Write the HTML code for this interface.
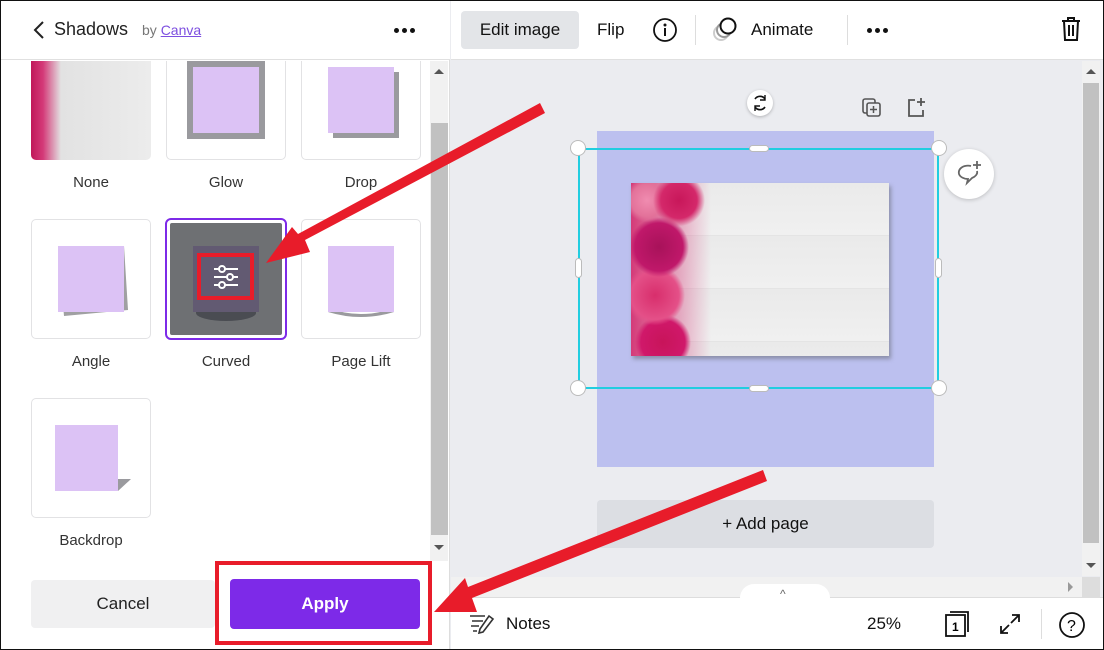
<!DOCTYPE html>
<html><head><style>
*{box-sizing:border-box;margin:0;padding:0}
body{width:1104px;height:650px;overflow:hidden;font-family:"Liberation Sans",sans-serif;background:#ebecf0;position:relative;color:#111}
.a{position:absolute}
.tile{position:absolute;width:120px;height:120px;border:1px solid #e2e2e4;border-radius:5px;background:#fff}
.lbl{position:absolute;width:120px;text-align:center;font-size:15px;color:#333}
.sq{position:absolute;background:#dcc2f5}
.dots{position:absolute;display:flex;gap:3px}
.dots i{display:block;width:5px;height:5px;border-radius:50%;background:#111}
</style></head><body>
<div class="a" style="left:0;top:0;width:450px;height:650px;background:#fff;border-right:1px solid #ddd"></div>
<div class="a" style="left:0;top:0;width:450px;height:60px;border-bottom:1px solid #e0e0e0;background:#fff"></div>
<svg class="a" style="left:32px;top:20px" width="14" height="20"><path d="M11 2 L3 10 L11 18" stroke="#222" stroke-width="2" fill="none"/></svg>
<div class="a" style="left:54px;top:19px;font-size:18px;color:#222">Shadows</div>
<div class="a" style="left:142px;top:22px;font-size:14px;color:#777">by <span style="color:#7d4fe0;text-decoration:underline">Canva</span></div>
<div class="dots" style="left:394px;top:28px"><i></i><i></i><i></i></div>
<div class="a" style="left:430px;top:61px;width:18px;height:500px;background:#f1f1f1"></div>
<div class="a" style="left:431px;top:123px;width:17px;height:412px;background:#c1c1c1"></div>
<div class="a" style="left:434px;top:69px;width:0;height:0;border:5px solid transparent;border-bottom:5px solid #555;border-top:0"></div>
<div class="a" style="left:434px;top:545px;width:0;height:0;border:5px solid transparent;border-top:5px solid #555;border-bottom:0"></div>
<div class="a" style="left:31px;top:61px;width:120px;height:99px;border-radius:0 0 5px 5px;overflow:hidden;background:linear-gradient(90deg,#c0185a 0,#d43a78 12px,#e2e2e2 30px,#ececec 100%)"></div>
<div class="tile" style="left:166px;top:61px;height:99px;border-top:none;border-radius:0 0 5px 5px"></div>
<div class="a" style="left:187px;top:61px;width:78px;height:78px;background:#9a9a9e"></div>
<div class="sq" style="left:193px;top:67px;width:66px;height:66px"></div>
<div class="tile" style="left:301px;top:61px;height:99px;border-top:none;border-radius:0 0 5px 5px"></div>
<div class="a" style="left:333px;top:72px;width:66px;height:66px;background:#9a9a9e"></div>
<div class="sq" style="left:328px;top:67px;width:66px;height:66px"></div>
<div class="lbl" style="left:31px;top:174px">None</div>
<div class="lbl" style="left:166px;top:174px">Glow</div>
<div class="lbl" style="left:301px;top:174px">Drop</div>
<div class="tile" style="left:31px;top:219px"></div>
<svg class="a" style="left:58px;top:246px" width="72" height="72"><path d="M0 0 H66 L70 64 L6 70 Z" fill="#a0a0a2"/><rect width="66" height="66" fill="#dcc2f5"/></svg>
<div class="a" style="left:165px;top:218px;width:122px;height:122px;border:2px solid #7d2ae8;border-radius:6px;background:#fff;padding:3px"><div style="width:112px;height:112px;background:#6e7073;border-radius:2px"></div></div>
<div class="a" style="left:193px;top:246px;width:66px;height:66px;background:#625a72"></div>
<div class="a" style="left:196px;top:312px;width:60px;height:9px;background:#4a4c52;border-radius:0 0 30px 30px/0 0 8px 8px"></div>
<div class="a" style="left:197px;top:253px;width:57px;height:47px;border:4px solid #e81c2a"></div>
<svg class="a" style="left:212px;top:264px" width="28" height="26"><g stroke="#fff" stroke-width="2" fill="#625a72"><line x1="2" y1="5" x2="26" y2="5"/><line x1="2" y1="13" x2="26" y2="13"/><line x1="2" y1="21" x2="26" y2="21"/><circle cx="10" cy="5" r="3"/><circle cx="18" cy="13" r="3"/><circle cx="10" cy="21" r="3"/></g></svg>
<div class="tile" style="left:301px;top:219px"></div>
<svg class="a" style="left:328px;top:246px" width="68" height="74"><path d="M0 62 Q33 74 66 62 V66 Q33 76 0 66Z" fill="#9a9a9e"/><rect width="66" height="66" fill="#dcc2f5"/></svg>
<div class="lbl" style="left:31px;top:353px">Angle</div>
<div class="lbl" style="left:166px;top:353px">Curved</div>
<div class="lbl" style="left:301px;top:353px">Page Lift</div>
<div class="tile" style="left:31px;top:398px"></div>
<svg class="a" style="left:55px;top:425px" width="80" height="72"><rect width="63" height="66" fill="#dcc2f5"/><path d="M63 54 L76 54 L63 66Z" fill="#9a9a9e"/></svg>
<div class="lbl" style="left:31px;top:532px">Backdrop</div>
<div class="a" style="left:31px;top:580px;width:184px;height:48px;background:#f0f0f1;border-radius:4px;text-align:center;line-height:48px;font-size:17px;color:#222">Cancel</div>
<div class="a" style="left:230px;top:579px;width:190px;height:50px;background:#7d2ae8;border-radius:4px;text-align:center;line-height:50px;font-size:17px;color:#fff;font-weight:bold">Apply</div>
<div class="a" style="left:215px;top:561px;width:217px;height:84px;border:4px solid #e81c2a"></div>

<div class="a" style="left:451px;top:0;width:653px;height:60px;background:#fff;border-bottom:1px solid #e0e0e0"></div>
<div class="a" style="left:461px;top:11px;width:118px;height:38px;background:#e3e5e8;border-radius:4px;text-align:center;line-height:38px;font-size:17px">Edit image</div>
<div class="a" style="left:597px;top:20px;font-size:17px">Flip</div>
<svg class="a" style="left:652px;top:17px" width="26" height="26"><circle cx="13" cy="13" r="11" stroke="#111" stroke-width="1.8" fill="none"/><circle cx="13" cy="8" r="1.5" fill="#111"/><line x1="13" y1="11" x2="13" y2="19" stroke="#111" stroke-width="2"/></svg>
<div class="a" style="left:695px;top:15px;width:1px;height:30px;background:#ddd"></div>
<svg class="a" style="left:711px;top:15px" width="30" height="30"><circle cx="10" cy="18" r="7" fill="none" stroke="#ccc" stroke-width="2"/><circle cx="13" cy="15" r="7" fill="#fff" stroke="#999" stroke-width="2"/><circle cx="17" cy="11" r="7.5" fill="#fff" stroke="#111" stroke-width="2"/></svg>
<div class="a" style="left:751px;top:20px;font-size:17px">Animate</div>
<div class="a" style="left:847px;top:15px;width:1px;height:30px;background:#ddd"></div>
<div class="dots" style="left:867px;top:28px"><i></i><i></i><i></i></div>
<svg class="a" style="left:1059px;top:16px" width="24" height="26"><path d="M3 5H21M9 5V2H15V5M5 5L6 24H18L19 5M10 9V20M14 9V20" stroke="#111" stroke-width="2" fill="none"/></svg>

<div class="a" style="left:1082px;top:61px;width:18px;height:515px;background:#f1f1f1"></div>
<div class="a" style="left:1083px;top:83px;width:16px;height:460px;background:#c1c1c1"></div>
<div class="a" style="left:1086px;top:69px;border:5px solid transparent;border-bottom:5px solid #555;border-top:0"></div>
<div class="a" style="left:1086px;top:563px;border:5px solid transparent;border-top:5px solid #555;border-bottom:0"></div>
<div class="a" style="left:451px;top:577px;width:631px;height:20px;background:#f1f1f1"></div>
<div class="a" style="left:1068px;top:582px;border:5px solid transparent;border-left:5px solid #999;border-right:0"></div>
<div class="a" style="left:1082px;top:577px;width:18px;height:20px;background:#ddd"></div>

<div class="a" style="left:747px;top:90px;width:26px;height:26px;border-radius:50%;background:#fff;box-shadow:0 1px 3px rgba(0,0,0,.25)"></div>
<svg class="a" style="left:750px;top:93px" width="20" height="20"><path d="M5 6A6 6 0 0 1 15 6M15 14A6 6 0 0 1 5 14" fill="none" stroke="#111" stroke-width="1.6"/><path d="M15 2V7H10M5 18V13H10" fill="none" stroke="#111" stroke-width="1.4"/></svg>
<svg class="a" style="left:861px;top:97px" width="22" height="22"><rect x="2" y="2" width="12" height="14" rx="2" fill="none" stroke="#555" stroke-width="1.6"/><rect x="6" y="6" width="13" height="13" rx="2" fill="#ebecf0" stroke="#555" stroke-width="1.6"/><path d="M12.5 9V16M9 12.5H16" stroke="#555" stroke-width="1.5"/></svg>
<svg class="a" style="left:906px;top:96px" width="22" height="22"><path d="M9 4H3V20H17V14M15 2V10M11 6H19" stroke="#555" stroke-width="1.8" fill="none"/></svg>

<div class="a" style="left:597px;top:131px;width:337px;height:336px;background:#bcc0ef"></div>
<div class="a" style="left:633px;top:186px;width:258px;height:173px;background:#8a8ea8;filter:blur(2px)"></div>
<div class="a" style="left:631px;top:183px;width:258px;height:173px;background:repeating-linear-gradient(180deg,#eaeaea 0,#f0f0f0 52px,#d8d8d8 53px)"></div>
<div class="a" style="left:631px;top:183px;width:80px;height:173px;background:radial-gradient(circle at 60% 10%,#c8175a 0,#d4286a 18px,transparent 26px),radial-gradient(circle at 20% 10%,#f08cb0 0,#e3729a 16px,transparent 22px),radial-gradient(circle at 35% 37%,#a8125a 0,#c0186a 24px,transparent 30px),radial-gradient(circle at 30% 65%,#d82e6c 0,#e45088 24px,transparent 30px),radial-gradient(circle at 40% 92%,#c8145a 0,#d0186a 22px,transparent 28px),linear-gradient(90deg,#d43a78,rgba(240,240,240,0))"></div>
<div class="a" style="left:578px;top:148px;width:361px;height:241px;border:2px solid #21cde0"></div>
<div class="a" style="left:570px;top:140px;width:16px;height:16px;border-radius:50%;background:#fff;border:1px solid #bbb"></div>
<div class="a" style="left:931px;top:140px;width:16px;height:16px;border-radius:50%;background:#fff;border:1px solid #bbb"></div>
<div class="a" style="left:570px;top:380px;width:16px;height:16px;border-radius:50%;background:#fff;border:1px solid #bbb"></div>
<div class="a" style="left:931px;top:380px;width:16px;height:16px;border-radius:50%;background:#fff;border:1px solid #bbb"></div>
<div class="a" style="left:749px;top:145px;width:20px;height:7px;border-radius:4px;background:#fff;border:1px solid #bbb"></div>
<div class="a" style="left:749px;top:385px;width:20px;height:7px;border-radius:4px;background:#fff;border:1px solid #bbb"></div>
<div class="a" style="left:575px;top:258px;width:7px;height:20px;border-radius:4px;background:#fff;border:1px solid #bbb"></div>
<div class="a" style="left:935px;top:258px;width:7px;height:20px;border-radius:4px;background:#fff;border:1px solid #bbb"></div>
<div class="a" style="left:944px;top:149px;width:50px;height:50px;border-radius:50%;background:#fff;box-shadow:0 1px 4px rgba(0,0,0,.2)"></div>
<svg class="a" style="left:955px;top:160px" width="30" height="28"><path d="M16 6C14 5.5 12 5.5 10 6C6 7 3 10 4 14C5 17 9 19 13 19L12 23L17 18C20 17 23 14 22 11" fill="none" stroke="#666" stroke-width="1.8"/><path d="M22 1V9M18 5H26" stroke="#666" stroke-width="1.8"/></svg>

<div class="a" style="left:597px;top:500px;width:337px;height:48px;background:#dcdee3;border-radius:4px;text-align:center;line-height:48px;font-size:17px">+ Add page</div>

<div class="a" style="left:451px;top:597px;width:653px;height:53px;background:#fff;border-top:1px solid #ddd"></div>
<div class="a" style="left:740px;top:584px;width:90px;height:16px;background:#fff;border-radius:14px 14px 0 0"></div>
<div class="a" style="left:780px;top:587px;font-size:12px;color:#666">^</div>
<svg class="a" style="left:469px;top:613px" width="26" height="22"><path d="M1 3H16M3 8H14M2 13H10M4 18H8" stroke="#333" stroke-width="1.6"/><path d="M20 3L24 6L14 19L10 20L11 16Z" fill="none" stroke="#333" stroke-width="1.6"/></svg>
<div class="a" style="left:506px;top:614px;font-size:17px">Notes</div>
<div class="a" style="left:867px;top:614px;font-size:17px">25%</div>
<svg class="a" style="left:944px;top:609px" width="30" height="30"><path d="M6 3H24V23" fill="none" stroke="#111" stroke-width="1.8"/><rect x="2" y="6" width="19" height="21" fill="#fff" stroke="#111" stroke-width="1.8"/><text x="8" y="22" font-size="12" font-family="Liberation Sans" font-weight="bold">1</text></svg>
<svg class="a" style="left:998px;top:612px" width="24" height="24"><path d="M14 3H21V10M21 3L13 11M10 21H3V14M3 21L11 13" stroke="#111" stroke-width="1.8" fill="none"/></svg>
<div class="a" style="left:1041px;top:609px;width:1px;height:30px;background:#ddd"></div>
<svg class="a" style="left:1058px;top:611px" width="28" height="28"><circle cx="14" cy="14" r="12" fill="none" stroke="#111" stroke-width="1.8"/><text x="9" y="20" font-size="16" font-family="Liberation Sans">?</text></svg>

<svg class="a" style="left:0;top:0" width="1104" height="650">
<path d="M540 103 L545 113 L305 240 L310 252 L266 263 L292 227 L298 234 Z" fill="#e81c2a"/>
<path d="M763 470 L767 481 L472 598 L477 612 L434 612 L465 578 L468 587 Z" fill="#e81c2a"/>
</svg>
<div class="a" style="left:0;top:0;width:1104px;height:650px;border:1px solid #111;pointer-events:none"></div>
</body></html>
